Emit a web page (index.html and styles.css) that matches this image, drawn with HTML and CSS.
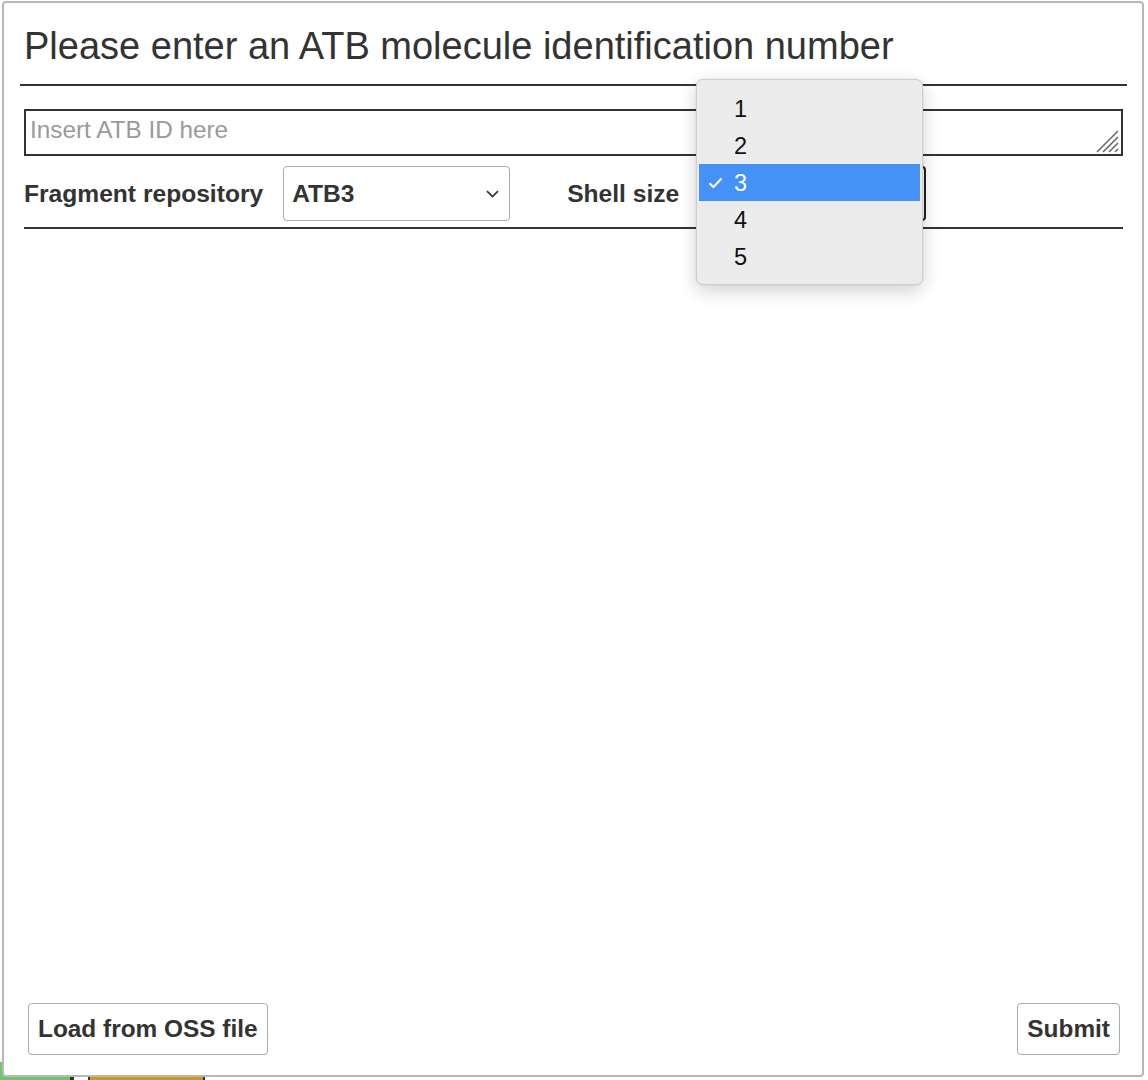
FILE: index.html
```html
<!DOCTYPE html>
<html lang="en">
<head>
<meta charset="utf-8">
<title>ATB molecule</title>
<link rel="stylesheet" href="styles.css">
</head>
<body>
<div class="page">
  <div class="backdrop-row">
    <div class="bg-green"></div>
    <div class="bg-dark"></div>
    <div class="bg-gold"></div>
  </div>

  <div class="dialog">
    <div class="dialog-header">
      <h1 class="dialog-title">Please enter an ATB molecule identification number</h1>
    </div>
    <div class="dialog-body">
      <div class="id-field">
        <textarea class="id-input" placeholder="Insert ATB ID here"></textarea>
        <svg class="resizer" width="26" height="26" viewBox="0 0 26 26" aria-hidden="true">
          <path d="M3 24 L24 3 M9 24 L24 9 M15 24 L24 15 M21 24 L24 21" stroke="#6b6b6b" stroke-width="1.6" fill="none"/>
        </svg>
      </div>
      <div class="options-row">
        <span class="opt-label">Fragment repository</span>
        <div class="select-box">
          <span class="select-value">ATB3</span>
          <svg class="chevron" width="13" height="8" viewBox="0 0 13 8" aria-hidden="true">
            <path d="M1 1.2 L6.5 6.5 L12 1.2" stroke="#333" stroke-width="1.7" fill="none"/>
          </svg>
        </div>
        <span class="opt-label shell-label">Shell size</span>
        <div class="select-box focused">
          <span class="select-value">3</span>
        </div>
      </div>
    </div>
    <div class="dialog-footer">
      <button class="btn">Load from OSS file</button>
      <button class="btn">Submit</button>
    </div>
  </div>

  <ul class="dropdown">
    <li class="dd-item">1</li>
    <li class="dd-item">2</li>
    <li class="dd-item selected"><svg class="check" width="15" height="12" viewBox="0 0 15 12" aria-hidden="true"><path d="M1.5 6.2 L5.5 10 L13.5 1.5" stroke="#fff" stroke-width="2" fill="none"/></svg>3</li>
    <li class="dd-item">4</li>
    <li class="dd-item">5</li>
  </ul>
</div>
</body>
</html>
```

FILE: styles.css
```css
* { box-sizing: border-box; }

html, body {
  margin: 0;
  padding: 0;
  background: #ffffff;
}

body {
  font-family: "Liberation Sans", Arial, Helvetica, sans-serif;
  color: #333;
}

.page {
  position: relative;
  width: 1148px;
  height: 1080px;
  overflow: hidden;
  display: flex;
  flex-direction: column;
  justify-content: flex-end;
}

/* content of the page underneath the dialog */
.backdrop-row {
  display: flex;
  align-items: flex-end;
  height: 18px;
}
.bg-green {
  width: 70px;
  height: 18px;
  background: #71c46b;
}
.bg-dark {
  width: 4px;
  height: 4px;
  background: #333;
  margin-right: 14px;
}
.bg-gold {
  width: 117px;
  height: 4px;
  background: #c99a22;
  border-left: 2px solid #333;
  border-right: 2px solid #333;
}

/* dialog overlay */
.dialog {
  position: absolute;
  left: 2px;
  top: 1px;
  width: 1142px;
  height: 1076px;
  background: #fff;
  border: 2px solid #b8b8b8;
  border-radius: 4px;
  display: flex;
  flex-direction: column;
}

.dialog-header {
  margin: 0 15px 0 16px;
  padding: 22px 0 17px 4px;
  border-bottom: 2px solid #333;
}

.dialog-title {
  margin: 0;
  font-weight: normal;
  font-size: 38px;
  line-height: 42px;
  color: #333;
  white-space: nowrap;
}

.dialog-body {
  margin: 0 19px 0 20px;
  padding-top: 23px;
  flex: 1;
}

.id-field {
  position: relative;
  width: 1099px;
  height: 47px;
}

.id-input {
  display: block;
  width: 100%;
  height: 47px;
  margin: 0;
  border: 2px solid #333;
  border-radius: 0;
  padding: 5px 4px 0;
  font-family: "Liberation Sans", Arial, sans-serif;
  font-size: 24.3px;
  line-height: 28px;
  color: #333;
  resize: none;
  outline: none;
  background: #fff;
}
.id-input::placeholder {
  color: #9a9a9a;
}

.resizer {
  position: absolute;
  right: 3px;
  bottom: 2px;
}

.options-row {
  display: flex;
  align-items: center;
  margin-top: 10px;
  padding-bottom: 6px;
  border-bottom: 2px solid #333;
}

.opt-label {
  font-weight: bold;
  font-size: 24.6px;
  color: #333;
  white-space: nowrap;
  margin-right: 20px;
}

.shell-label {
  margin-left: 57px;
}

.select-box {
  display: flex;
  align-items: center;
  justify-content: space-between;
  width: 227px;
  height: 55px;
  padding: 0 10px 0 8px;
  border: 1px solid #aaa;
  border-radius: 4px;
  background: #fff;
}
.select-box.focused {
  border: 2px solid #222;
}

.select-value {
  font-weight: bold;
  font-size: 24.5px;
  color: #333;
}

.chevron {
  display: block;
}

.dialog-footer {
  display: flex;
  justify-content: space-between;
  align-items: flex-end;
  padding: 0 22px 20px 24px;
}

.btn {
  height: 52px;
  padding: 0 9px;
  border: 1px solid #aaa;
  border-radius: 4px;
  background: #fff;
  font-family: "Liberation Sans", Arial, sans-serif;
  font-weight: bold;
  font-size: 24.4px;
  color: #333;
  white-space: nowrap;
}

/* open select menu */
.dropdown {
  position: absolute;
  left: 696px;
  top: 79px;
  width: 227px;
  height: 206px;
  margin: 0;
  padding: 10px 2px;
  list-style: none;
  background: #ececec;
  border: 1px solid #cfcfcf;
  border-radius: 7px;
  box-shadow: 0 6px 18px rgba(0, 0, 0, 0.18), 0 0 2px rgba(0, 0, 0, 0.12);
}

.dd-item {
  position: relative;
  height: 37px;
  line-height: 38px;
  padding-left: 35px;
  font-size: 23.5px;
  color: #111;
}

.dd-item.selected {
  background: #4592f6;
  color: #fff;
}

.check {
  position: absolute;
  left: 9px;
  top: 13px;
}
```
